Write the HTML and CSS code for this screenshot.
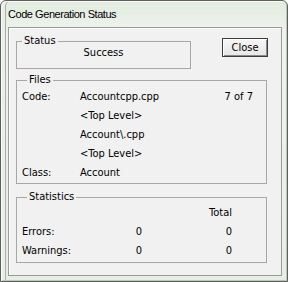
FILE: index.html
```html
<!DOCTYPE html>
<html>
<head>
<meta charset="utf-8">
<link rel="stylesheet" href="styles.css">
</head>
<body>
<div class="window">
  <div class="titlebar">Code Generation Status</div>
  <div class="client">
    <div class="top-row">
      <fieldset class="group status">
        <legend>Status</legend>
        <div class="status-text">Success</div>
      </fieldset>
      <button class="btn">Close</button>
    </div>
    <fieldset class="group files">
      <legend>Files</legend>
      <div class="frow"><span class="lbl">Code:</span><span class="val">Accountcpp.cpp</span><span class="cnt">7 of 7</span></div>
      <div class="frow"><span class="lbl"></span><span class="val">&lt;Top Level&gt;</span></div>
      <div class="frow"><span class="lbl"></span><span class="val">Account\.cpp</span></div>
      <div class="frow"><span class="lbl"></span><span class="val">&lt;Top Level&gt;</span></div>
      <div class="frow"><span class="lbl">Class:</span><span class="val">Account</span></div>
    </fieldset>
    <fieldset class="group stats">
      <legend>Statistics</legend>
      <div class="srow"><span></span><span></span><span class="num">Total</span></div>
      <div class="srow"><span>Errors:</span><span class="num">0</span><span class="num">0</span></div>
      <div class="srow"><span>Warnings:</span><span class="num">0</span><span class="num">0</span></div>
    </fieldset>
  </div>
</div>
</body>
</html>
```
FILE: styles.css
```css
* { box-sizing: border-box; }
html, body { margin: 0; padding: 0; background: #ffffff; }
body {
  width: 288px;
  height: 282px;
  font-family: "DejaVu Sans Condensed", "Liberation Sans", sans-serif;
  font-size: 11px;
  color: #000;
}
.window {
  width: 288px;
  height: 282px;
  border: 1px solid #5e5e5e;
  border-radius: 6px 6px 0 0;
  background: linear-gradient(180deg, #e3ece1 0%, #eef4ec 12%, #e6eee4 100%);
  padding: 0 5px 5px 7px;
  display: flex;
  flex-direction: column;
  box-shadow: inset 1px 1px 0 #f8fbf7, inset -1px -1px 0 #bfc6bd, inset 4px 0 0 #e9f0e7, inset 5px 0 0 #a9b0a7;
}
.titlebar {
  height: 26px;
  flex: none;
  display: flex;
  align-items: center;
  padding-bottom: 1px;
  font-family: "Liberation Sans", sans-serif;
  font-size: 11px;
  letter-spacing: -0.45px;
  color: #000;
}
.client {
  flex: 1;
  border: 1px solid #9a9a9a;
  background: #f1f1f1;
  box-shadow: inset 1px 1px 0 #ffffff;
  padding: 7px 0 0 7px;
  display: flex;
  flex-direction: column;
}
.top-row {
  display: flex;
  align-items: flex-start;
}
.group {
  margin: 0;
  padding: 0;
  border: 1px solid #a7a7a7;
  min-width: 0;
}
.group legend {
  margin-left: 5px;
  padding: 0 2px;
  line-height: 12px;
  font-size: 11px;
}
.status {
  width: 175px;
  padding-bottom: 9px;
}
.status-text {
  text-align: center;
  line-height: 12px;
}
.btn {
  margin: 3px 0 0 31px;
  width: 46px;
  height: 19px;
  padding: 0;
  font-family: inherit;
  font-size: 11px;
  color: #000;
  background: linear-gradient(180deg, #f6f6f6, #e6e6e6);
  border: 1px solid #3c3c3c;
  box-shadow: inset 1px 1px 0 #ffffff, inset -1px -1px 0 #8a8a8a;
}
.files {
  width: 251px;
  margin-top: 5px;
  padding: 1px 13px 1px 5px;
}
.frow {
  display: flex;
  height: 19px;
  line-height: 19px;
}
.frow .lbl { width: 58px; flex: none; }
.frow .val { flex: 1; }
.frow .cnt { flex: none; }
.stats {
  width: 251px;
  margin-top: 7px;
  padding: 0 0 2px 5px;
}
.srow {
  display: grid;
  grid-template-columns: 100px 20px 90px;
  height: 19px;
  line-height: 19px;
}
.srow .num { text-align: right; }
```
